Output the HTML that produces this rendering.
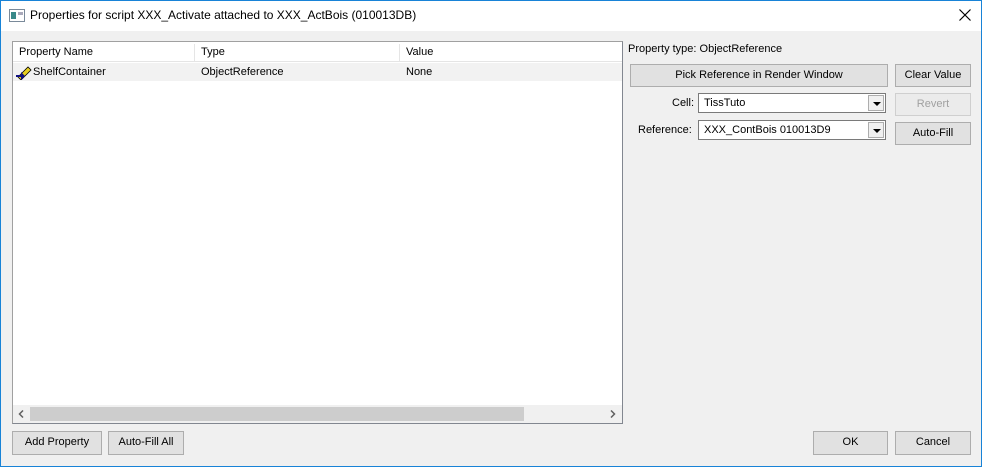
<!DOCTYPE html>
<html><head><meta charset="utf-8"><style>
*{box-sizing:border-box;margin:0;padding:0}
body{width:982px;height:467px;overflow:hidden;font-family:"Liberation Sans",Tahoma,sans-serif;font-size:11px;color:#000;background:#f0f0f0;position:relative}
.win{position:absolute;left:0;top:0;width:982px;height:467px;background:#f0f0f0}
.frame{position:absolute;left:0;top:0;width:982px;height:467px;border:1px solid #1883d7;pointer-events:none}
.title{position:absolute;left:0;top:0;width:982px;height:31px;background:#fff}
.title span{position:absolute;left:30px;top:8px;font-size:12px}
.abs{position:absolute}
.btn{position:absolute;background:#e1e1e1;border:1px solid #adadad;text-align:center;line-height:21px;font-size:11px}
.list{position:absolute;left:12px;top:41px;width:611px;height:383px;border:1px solid #828790;border-top-color:#a0a0a0;border-left-color:#a0a0a0;background:#fff}
.hdr{position:absolute;top:2px;height:17px;border-right:1px solid #e5e5e5;padding-left:6px;line-height:17px}
.combo{position:absolute;background:#fff;border:1px solid #7a7a7a;height:20px;padding-left:5px;line-height:18px}
.arr{position:absolute;right:1px;top:1px;width:16px;height:16px;background:#f0f0f0;border:1px solid #adadad}
.arr:after{content:"";position:absolute;left:4px;top:6px;border-left:4px solid transparent;border-right:4px solid transparent;border-top:4px solid #000}
</style></head><body><div class="win">
<div class="title">
<svg class="abs" style="left:9px;top:9px" width="16" height="13"><rect x="0.5" y="0.5" width="15" height="12" fill="#fff" stroke="#7a8a9a"/><rect x="2" y="3" width="5" height="7" fill="#3a8a8a"/><rect x="9" y="3" width="5" height="3" fill="#aab"/></svg>
<span>Properties for script XXX_Activate attached to XXX_ActBois (010013DB)</span>
<svg class="abs" style="left:959px;top:9px" width="12" height="12"><path d="M0.5 0.5L11.5 11.5M11.5 0.5L0.5 11.5" stroke="#000" stroke-width="1.2"/></svg>
</div>
<div class="list">
<div class="abs" style="left:0;top:0;width:609px;height:20px;background:#fff;border-bottom:1px solid #e5e5e5"></div>
<div class="hdr" style="left:0;width:182px">Property Name</div>
<div class="hdr" style="left:182px;width:205px">Type</div>
<div class="hdr" style="left:387px;width:222px;border-right:none">Value</div>
<div class="abs" style="left:0;top:21px;width:609px;height:18px;background:#f2f2f2"></div>
<svg class="abs" style="left:3px;top:23px" width="16" height="15"><path d="M2 12L12 2L15 5L5 15Z" fill="#e8d020" stroke="#000" stroke-width="0.8"/><path d="M0 10L5 10L5 7L9 11L5 15L5 12L0 12Z" fill="#101080"/></svg>
<div class="abs" style="left:20px;top:24px">ShelfContainer</div>
<div class="abs" style="left:188px;top:24px">ObjectReference</div>
<div class="abs" style="left:393px;top:24px">None</div>
<div class="abs" style="left:0;top:363px;width:609px;height:18px;background:#f0f0f0"></div>
<div class="abs" style="left:17px;top:365px;width:494px;height:14px;background:#cdcdcd"></div>
<svg class="abs" style="left:5px;top:368px" width="6" height="8"><path d="M5 0.5L1.5 4L5 7.5" fill="none" stroke="#606060" stroke-width="1.5"/></svg>
<svg class="abs" style="left:597px;top:368px" width="6" height="8"><path d="M1 0.5L4.5 4L1 7.5" fill="none" stroke="#606060" stroke-width="1.5"/></svg>
</div>
<div class="abs" style="left:628px;top:43px">Property type: ObjectReference</div>
<div class="btn" style="left:630px;top:64px;width:258px;height:23px">Pick Reference in Render Window</div>
<div class="btn" style="left:895px;top:64px;width:76px;height:23px">Clear Value</div>
<div class="abs" style="left:672px;top:97px">Cell:</div>
<div class="combo" style="left:698px;top:93px;width:188px">TissTuto<div class="arr"></div></div>
<div class="btn" style="left:895px;top:93px;width:76px;height:23px;color:#a0a0a0;background:#ebebeb;border-color:#cfcfcf">Revert</div>
<div class="abs" style="left:638px;top:124px">Reference:</div>
<div class="combo" style="left:698px;top:120px;width:188px">XXX_ContBois 010013D9<div class="arr"></div></div>
<div class="btn" style="left:895px;top:122px;width:76px;height:23px">Auto-Fill</div>
<div class="btn" style="left:12px;top:431px;width:90px;height:24px">Add Property</div>
<div class="btn" style="left:108px;top:431px;width:76px;height:24px">Auto-Fill All</div>
<div class="btn" style="left:813px;top:431px;width:75px;height:24px">OK</div>
<div class="btn" style="left:895px;top:431px;width:76px;height:24px">Cancel</div>
<div class="frame"></div>
</div></body></html>
